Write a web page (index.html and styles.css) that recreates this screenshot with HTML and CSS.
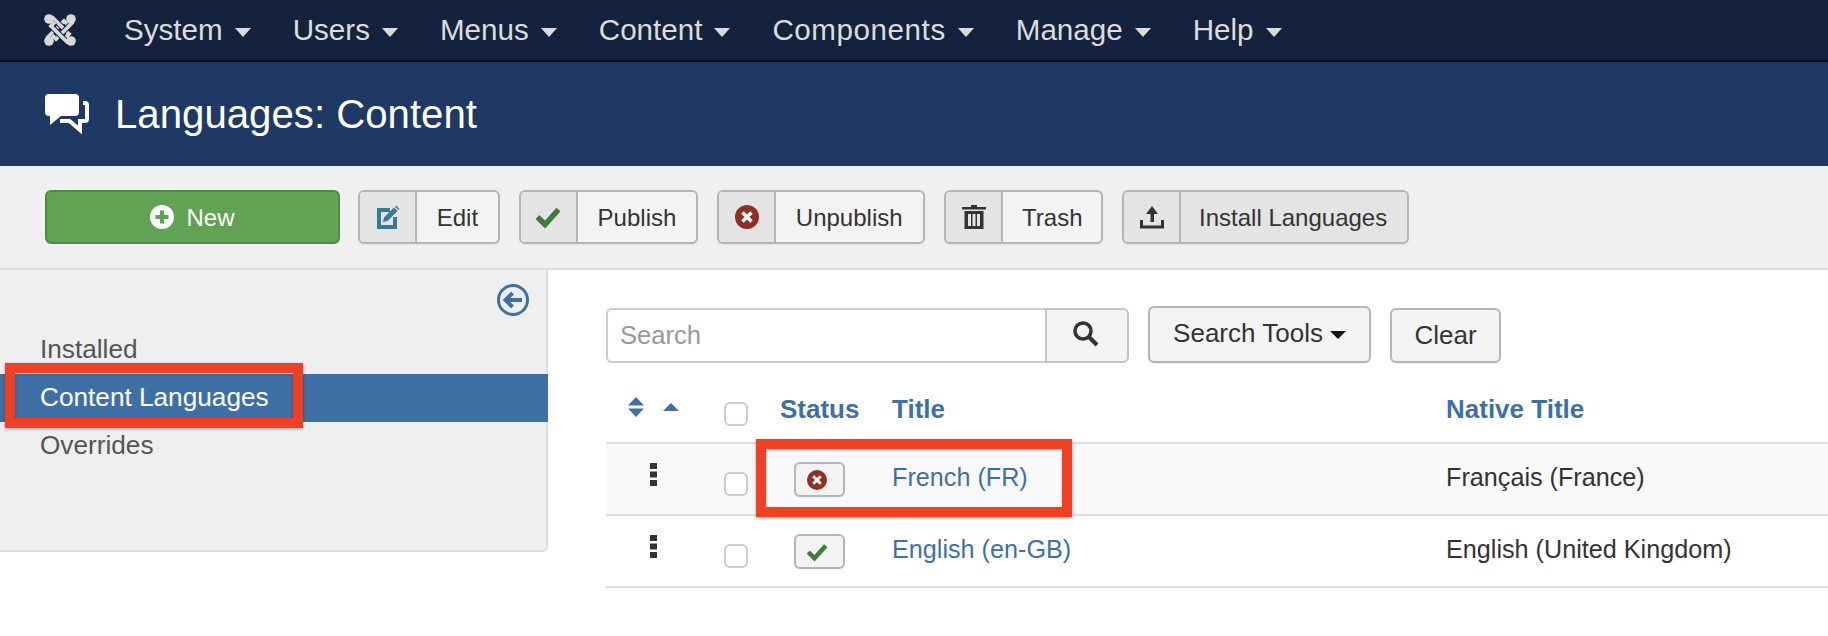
FILE: index.html
```html
<!DOCTYPE html>
<html lang="en">
<head>
<meta charset="utf-8">
<title>Languages: Content</title>
<link rel="stylesheet" href="styles.css">
</head>
<body>
<div class="page">
  <nav class="topnav">
    <svg class="logo" viewBox="0 0 32 32" aria-hidden="true">
      <g fill="none">
        <path class="w-under" d="M3 24L20 7L24 11"/><path class="w-over" d="M3 24L20 7L24 11"/>
        <path class="w-under" d="M8 3L25 20L21 24"/><path class="w-over" d="M8 3L25 20L21 24"/>
        <path class="w-under" d="M29 8L12 25L8 21"/><path class="w-over" d="M29 8L12 25L8 21"/>
        <path class="w-under" d="M24 29L7 12L11 8"/><path class="w-over" d="M24 29L7 12L11 8"/>
      </g>
      <g class="logo-dots"><circle cx="5" cy="5" r="4.800"/><circle cx="27" cy="5" r="4.800"/><circle cx="5" cy="27" r="4.800"/><circle cx="27" cy="27" r="4.800"/></g>
    </svg>
    <ul class="menu">
      <li class="menu-item">System<i class="caret"></i></li>
      <li class="menu-item">Users<i class="caret"></i></li>
      <li class="menu-item">Menus<i class="caret"></i></li>
      <li class="menu-item">Content<i class="caret"></i></li>
      <li class="menu-item menu-item-wide">Components<i class="caret"></i></li>
      <li class="menu-item">Manage<i class="caret"></i></li>
      <li class="menu-item">Help<i class="caret"></i></li>
    </ul>
  </nav>

  <header class="titlebar">
    <svg class="title-icon" viewBox="0 0 44 40" aria-hidden="true">
      <path class="fill-white" d="M4 0H30a4 4 0 0 1 4 4V18a4 4 0 0 1-4 4H16L5 31V22H4a4 4 0 0 1-4-4V4a4 4 0 0 1 4-4Z"/>
      <path class="stroke-white" d="M38 9h2a2 2 0 0 1 2 2V25a2 2 0 0 1-2 2H35V36L24.500 27H15"/>
    </svg>
    <h1 class="title">Languages: Content</h1>
  </header>

  <div class="toolbar">
    <button class="btn-new">
      <svg class="ico-24" viewBox="0 0 24 24" aria-hidden="true"><circle class="fill-white" cx="12" cy="12" r="12"/><path class="plus" d="M12 5.500V18.500M5.500 12H18.500"/></svg>
      <span class="new-label">New</span>
    </button>
    <div class="tbtn"><span class="tbtn-ico"><svg class="ico-24" viewBox="0 0 24 24" aria-hidden="true"><path class="edit-stroke" d="M14 5H3V22H19V12"/><path class="edit-fill" d="M18 2.500L21.500 6 11.500 16 7 17 8 12.500ZM20 .5 L23.500 4 22.500 5 19 1.500Z"/></svg></span><span class="tbtn-label">Edit</span></div>
    <div class="tbtn"><span class="tbtn-ico"><svg class="ico-24" viewBox="0 0 24 24" aria-hidden="true"><path class="check-big" d="M1.500 12L9 19.500 22.500 4.500"/></svg></span><span class="tbtn-label">Publish</span></div>
    <div class="tbtn tbtn-unpublish"><span class="tbtn-ico"><svg class="ico-24" viewBox="0 0 24 24" aria-hidden="true"><circle class="fill-red" cx="12" cy="12" r="12"/><path class="x-white" d="M7.500 7.500L16.500 16.500M16.500 7.500L7.500 16.500"/></svg></span><span class="tbtn-label">Unpublish</span></div>
    <div class="tbtn tbtn-trash"><span class="tbtn-ico"><svg class="ico-24" viewBox="0 0 24 24" aria-hidden="true"><path class="fill-dark" d="M9 0H15V2H24V4.500H0V2H9ZM2.500 6H21.500V24H2.500ZM6 9V21H9V9ZM10.500 9V21H13.500V9ZM15 9V21H18V9Z" fill-rule="evenodd"/></svg></span><span class="tbtn-label">Trash</span></div>
    <div class="tbtn tbtn-grey"><span class="tbtn-ico"><svg class="ico-24" viewBox="0 0 24 24" aria-hidden="true"><path class="fill-dark" d="M12 1L18 9H14V17H10.500V9H6ZM0 15H3V20.500H21V15H24V23.500H0Z"/></svg></span><span class="tbtn-label">Install Languages</span></div>
  </div>

  <div class="content">
    <aside class="sidebar">
      <div class="toggle-row">
        <svg class="toggle" viewBox="0 0 32 32" aria-hidden="true"><circle class="toggle-ring" cx="16" cy="16" r="14.500"/><path class="toggle-arrow" d="M25 16H9M15.500 9L8.500 16 15.500 23"/></svg>
      </div>
      <a class="side-item">Installed</a>
      <a class="side-item active">Content Languages</a>
      <a class="side-item">Overrides</a>
    </aside>

    <main class="main">
      <div class="filters">
        <div class="search-group">
          <input class="search-input" type="text" placeholder="Search">
          <span class="search-btn"><svg class="ico-26" viewBox="0 0 26 26" aria-hidden="true"><circle class="mag" cx="10" cy="10" r="8"/><path class="mag-h" d="M16 16L24 24"/></svg></span>
        </div>
        <button class="plain-btn tools">Search Tools<i class="caret-black"></i></button>
        <button class="plain-btn clear">Clear</button>
      </div>

      <table class="grid">
        <colgroup><col class="c-order"><col class="c-check"><col class="c-status"><col class="c-title"><col class="c-native"></colgroup>
        <thead>
          <tr>
            <th class="order-head"><svg class="sort" viewBox="0 0 52 20" aria-hidden="true"><path class="fill-blue" d="M8 0L16 8.500H0ZM8 20L0 11.500H16ZM43 6L51 14H35Z"/></svg></th>
            <th class="check-cell"><input class="cb" type="checkbox"></th>
            <th class="text-cell">Status</th>
            <th class="text-cell">Title</th>
            <th class="text-cell">Native Title</th>
          </tr>
        </thead>
        <tbody>
          <tr class="odd">
            <td class="handle-cell"><svg class="handle" viewBox="0 0 7 23" aria-hidden="true"><path class="fill-dark" d="M0 0H7V6H0ZM0 8.500H7V14.500H0ZM0 17H7V23H0Z"/></svg></td>
            <td class="check-cell"><input class="cb" type="checkbox"></td>
            <td class="status-cell"><span class="state"><svg class="ico-20" viewBox="0 0 24 24" aria-hidden="true"><circle class="fill-red" cx="12" cy="12" r="12"/><path class="x-white" d="M7.500 7.500L16.500 16.500M16.500 7.500L7.500 16.500"/></svg></span></td>
            <td class="text-cell"><a class="link">French (FR)</a></td>
            <td class="text-cell">Français (France)</td>
          </tr>
          <tr>
            <td class="handle-cell"><svg class="handle" viewBox="0 0 7 23" aria-hidden="true"><path class="fill-dark" d="M0 0H7V6H0ZM0 8.500H7V14.500H0ZM0 17H7V23H0Z"/></svg></td>
            <td class="check-cell"><input class="cb" type="checkbox"></td>
            <td class="status-cell"><span class="state"><svg class="ico-20" viewBox="0 0 24 24" aria-hidden="true"><path class="check-big" d="M1.500 12L9 19.500 22.500 4.500"/></svg></span></td>
            <td class="text-cell"><a class="link">English (en-GB)</a></td>
            <td class="text-cell">English (United Kingdom)</td>
          </tr>
        </tbody>
      </table>
    </main>
  </div>

  <div class="mark mark-side"></div>
  <div class="mark mark-row"></div>
</div>
</body>
</html>
```

FILE: styles.css
```css
* { box-sizing: border-box; }
html, body { margin: 0; padding: 0; background: #fff; }
body { font-family: "Liberation Sans", Arial, sans-serif; color: #333; font-size: 24px; overflow: hidden; }
.page { position: relative; width: 1828px; height: 636px; overflow: hidden; }

/* top nav */
.topnav { height: 62px; background: #14223e; border-bottom: 2px solid #0b1322; display: flex; align-items: center; padding-left: 44px; }
.logo { width: 32px; height: 32px; margin-right: 48px; flex: none; }
.w-under { stroke: #14223e; stroke-width: 5.600; }
.w-over { stroke: #d8d8d8; stroke-width: 3.800; }
.logo-dots { fill: #d8d8d8; }
.menu { list-style: none; margin: 0; padding: 0; display: flex; }
.menu-item { display: flex; align-items: center; color: #dcdcdc; font-size: 29.6px; line-height: 36px; margin-right: 42px; white-space: nowrap; }
.menu-item-wide { letter-spacing: .55px; }
.caret { display: block; width: 0; height: 0; margin: 4px 0 0 12px; border-left: 8px solid transparent; border-right: 8px solid transparent; border-top: 9px solid #dcdcdc; }

/* title */
.titlebar { height: 104px; background: #1f3864; display: flex; align-items: center; padding-left: 45px; }
.title-icon { width: 44px; height: 40px; margin-right: 26px; flex: none; }
.title { margin: 0; padding-top: 2px; font-size: 40.2px; font-weight: 400; color: #fff; line-height: 48px; }
.fill-white { fill: #fff; }
.stroke-white { fill: none; stroke: #fff; stroke-width: 4; }

/* toolbar */
.toolbar { height: 104px; background: #f0f0f0; border-bottom: 2px solid #dedede; padding: 24px 0 0 45px; display: flex; align-items: flex-start; gap: 19px; }
.btn-new { width: 295px; height: 54px; background: #62a254; border: 2px solid #4f8a42; border-radius: 6px; color: #fff; font: inherit; display: flex; align-items: center; justify-content: center; gap: 12px; padding: 0; margin-right: -1px; }
.new-label { padding-top: 2px; }
.plus { stroke: #62a254; stroke-width: 4; fill: none; }
.tbtn { height: 54px; display: flex; border: 2px solid #b5b5b5; border-radius: 6px; background: #f3f3f3; overflow: hidden; box-shadow: 0 1px 2px rgba(0,0,0,.06); }
.tbtn-ico { width: 57px; background: #e4e4e4; border-right: 2px solid #b5b5b5; display: flex; align-items: center; justify-content: center; flex: none; }
.tbtn-label { padding: 2px 19.750px 0; display: flex; align-items: center; white-space: nowrap; color: #333; }
.tbtn-unpublish .tbtn-label { padding: 2px 20.500px 0 19.750px; }
.tbtn-trash .tbtn-label { padding: 2px 18.500px 0 19px; }
.tbtn-grey { background: #e4e4e4; }
.tbtn-grey .tbtn-label { padding: 2px 20px 0 18px; }
.ico-24 { width: 24px; height: 24px; display: block; }
.ico-26 { width: 26px; height: 26px; display: block; }
.ico-20 { width: 20px; height: 20px; display: block; }
.edit-stroke { fill: none; stroke: #38789a; stroke-width: 4; }
.edit-fill { fill: #38789a; }
.check-big { fill: none; stroke: #3f7d3a; stroke-width: 5.500; }
.fill-red { fill: #8f2f25; }
.x-white { stroke: #fff; stroke-width: 3.500; fill: none; }
.fill-dark { fill: #333; }
.fill-blue { fill: #3f70a5; }

/* content */
.content { display: flex; align-items: flex-start; }
.sidebar { width: 548px; height: 282px; flex: none; background: #efefef; border-right: 2px solid #dedede; border-bottom: 2px solid #dedede; border-bottom-right-radius: 6px; }
.toggle-row { height: 56px; display: flex; justify-content: flex-end; padding: 14px 17px 0 0; }
.toggle { width: 32px; height: 32px; display: block; }
.toggle-ring { fill: none; stroke: #3f70a5; stroke-width: 3; }
.toggle-arrow { fill: none; stroke: #3f70a5; stroke-width: 4; }
.side-item { display: flex; align-items: center; height: 48px; padding: 0 0 2px 40px; font-size: 26.2px; color: #555; }
.side-item.active { background: #3f70a5; color: #fff; margin-right: -2px; }

.main { flex: 1; min-width: 0; padding: 36px 0 0 58px; }
.filters { display: flex; align-items: flex-end; height: 57px; }
.search-group { display: flex; height: 55px; width: 523px; margin-right: 19px; }
.search-input { width: 439px; height: 55px; border: 2px solid #ccc; border-right: 0; border-radius: 6px 0 0 6px; padding: 0 12px; font: inherit; font-size: 25.6px; color: #333; background: #fff; outline: 0; }
.search-input::placeholder { color: #999; opacity: 1; }
.search-btn { flex: 1; height: 55px; background: #f3f3f3; border: 2px solid #c4c4c4; border-radius: 0 6px 6px 0; display: flex; align-items: center; justify-content: center; padding: 0 3px 4px 0; }
.mag { fill: none; stroke: #333; stroke-width: 3.500; }
.mag-h { fill: none; stroke: #333; stroke-width: 4; }
.plain-btn { background: #f3f3f3; border: 2px solid #b5b5b5; border-radius: 6px; font: inherit; font-size: 26px; color: #333; display: flex; align-items: center; justify-content: center; padding: 0; box-shadow: 0 1px 2px rgba(0,0,0,.06); }
.tools { width: 223px; height: 57px; margin-right: 19px; padding-bottom: 3px; }
.clear { width: 111px; height: 55px; }
.caret-black { display: block; width: 0; height: 0; margin: 3px 0 0 7px; border-left: 8px solid transparent; border-right: 8px solid transparent; border-top: 8px solid #111; }

/* table */
.grid { border-collapse: separate; border-spacing: 0; table-layout: fixed; width: 1222px; font-size: 25.2px; }
.c-order { width: 106px; }
.c-check { width: 50px; }
.c-status { width: 112px; }
.c-title { width: 554px; }
.c-native { width: 400px; }
.grid th, .grid td { border-bottom: 2px solid #dedede; vertical-align: top; padding: 0; text-align: left; line-height: 28px; }
.grid th { height: 81px; padding-top: 32px; font-size: 26px; font-weight: 700; color: #3f70a5; }
.grid td { height: 72px; padding-top: 19px; }
.grid .odd td { background: #f9f9f9; }
.grid .text-cell { padding-left: 18px; }
.grid .order-head { padding-left: 22px; padding-top: 34px; }
.sort { width: 52px; height: 20px; display: block; }
.grid .handle-cell { padding-left: 44px; }
.handle { width: 7px; height: 23px; display: block; }
.grid .check-cell { padding-left: 12px; }
.cb { appearance: none; -webkit-appearance: none; display: block; width: 24px; height: 24px; margin: 9px 0 0; background: #fff; border: 2px solid #ccc; border-radius: 6px; }
.grid th .cb { margin-top: 7px; }
.grid .status-cell { padding-left: 32px; padding-top: 18px; }
.state { width: 51px; height: 35px; background: #f3f3f3; border: 2px solid #b5b5b5; border-radius: 6px; display: flex; align-items: center; justify-content: center; padding-right: 5px; box-shadow: 0 1px 2px rgba(0,0,0,.06); }
.link { color: #3f70a5; }

/* annotation rectangles laid over the screenshot */
.mark { position: absolute; border: 10px solid #ee4023; box-shadow: 0 1px 3px rgba(0,0,0,.35), inset 0 1px 3px rgba(0,0,0,.3); }
.mark-side { left: 5px; top: 363px; width: 298px; height: 65px; }
.mark-row { left: 756px; top: 439px; width: 316px; height: 78px; }
```
